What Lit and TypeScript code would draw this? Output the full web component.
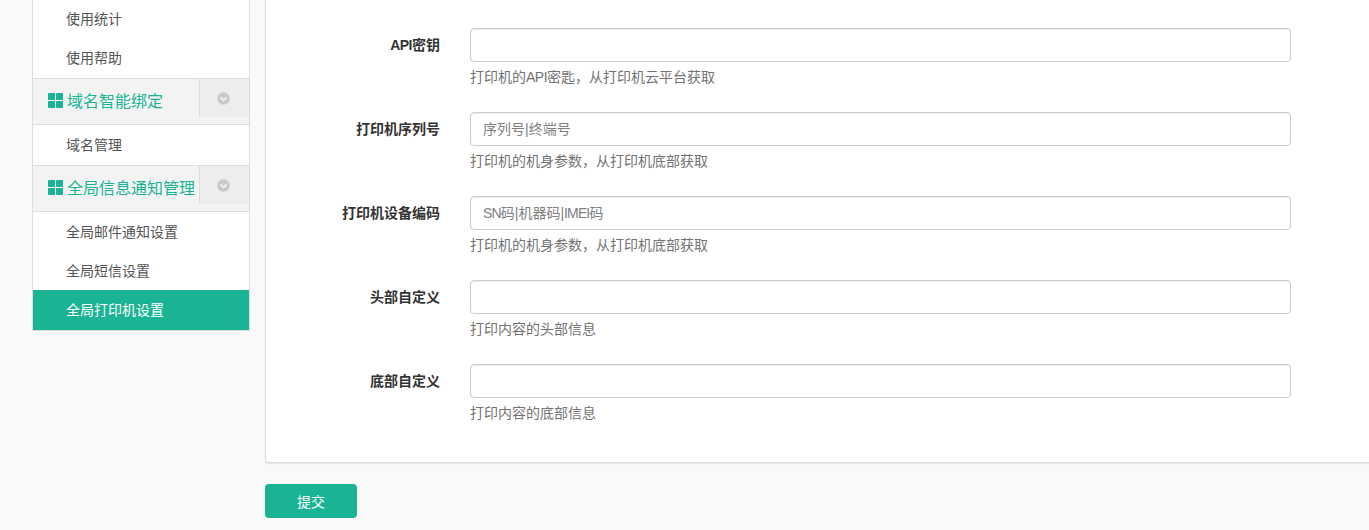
import { LitElement, html, css } from "lit";
import { customElement } from "lit/decorators.js";

const grid = html`<svg class="grid" viewBox="0 0 15 15" width="15" height="15" aria-hidden="true"><rect x="0" y="0" width="7" height="7" rx="1"/><rect x="8" y="0" width="7" height="7" rx="1"/><rect x="0" y="8" width="7" height="7" rx="1"/><rect x="8" y="8" width="7" height="7" rx="1"/></svg>`;
const chev = html`<svg class="chev" viewBox="0 0 13 13" width="13" height="13" aria-hidden="true"><circle cx="6.5" cy="6.5" r="6.2" fill="#c9c9c9"/><path d="M3.4 5.4 6.5 8.4 9.6 5.4" fill="none" stroke="#f0f0f0" stroke-width="2"/></svg>`;
const lat = (s: string) => html`<span class="lat">${s}</span>`;
const latN = (s: string) => html`<span class="lat narrow">${s}</span>`;

const fields = [
  { label: html`${lat("API")}密钥`, ph: "", help: html`打印机的${lat("API")}密匙，从打印机云平台获取` },
  { label: "打印机序列号", ph: "序列号|终端号", help: "打印机的机身参数，从打印机底部获取" },
  { label: "打印机设备编码", ph: html`${latN("SN")}码|机器码|${latN("IMEI")}码`, help: "打印机的机身参数，从打印机底部获取" },
  { label: "头部自定义", ph: "", help: "打印内容的头部信息" },
  { label: "底部自定义", ph: "", help: "打印内容的底部信息" },
];

@customElement("app-root")
export class AppRoot extends LitElement {
  static styles = css`
    :host {
      display: block;
      height: 530px;
      overflow: hidden;
      background: #f9f9f9;
      font-family: "Liberation Sans", "Noto Sans CJK SC", sans-serif;
      font-size: 14px;
      color: #555;
    }
    .lat { letter-spacing: -0.5px; }
    .lat.narrow { letter-spacing: -0.85px; }
    .page { display: flex; align-items: flex-start; padding-left: 32px; gap: 15px; }
    .side {
      width: 216px; flex: none; background: #fff;
      border: 1px solid #ddd; border-top: 0;
    }
    .item { height: 39px; line-height: 39px; padding-left: 33px; color: #555; }
    .item.low { height: 38px; padding-top: 1px; }
    .item.last { height: 40px; line-height: 40px; }
    .item.active { background: #1ab394; color: #fff; }
    .head {
      display: flex; height: 45px; background: #f3f3f3;
      border-top: 1px solid #ddd; border-bottom: 1px solid #ddd;
    }
    .title {
      flex: 1; display: flex; align-items: center; gap: 4px;
      padding: 0 0 4px 15px; font-size: 16px; color: #1ab394; white-space: nowrap;
    }
    .grid { fill: #1ab394; flex: none; margin-top: 1px; }
    .toggle {
      width: 50px; height: 38px; background: #ededed; border-left: 1px solid #ddd;
      display: flex; align-items: center; justify-content: center; padding: 0 2px 0 0; box-sizing: border-box;
    }
    .main { flex: 1; min-width: 0; }
    .panel {
      height: 463px; box-sizing: border-box; background: #fff;
      border: 1px solid #ddd; border-top: 0; border-right: 0;
      box-shadow: 0 1px 1px rgba(0,0,0,.08);
      border-bottom-left-radius: 4px; padding-top: 28px; margin-right: -1px;
    }
    .row { display: flex; height: 84px; }
    .label { width: 174px; flex: none; text-align: right; line-height: 34px; font-weight: 700; color: #333; }
    .col { margin-left: 30px; width: 821px; }
    .input {
      height: 34px; box-sizing: border-box; border: 1px solid #ccc; border-radius: 4px;
      box-shadow: inset 0 1px 1px rgba(0,0,0,.075);
      padding: 0 12px; line-height: 32px; color: #808080; background: #fff;
    }
    .help { margin-top: 5px; line-height: 20px; color: #737373; }
    .submit {
      display: block; margin-top: 21px; width: 92px; height: 34px; border: 0; border-radius: 4px;
      background: #1ab394; color: #fff; font: inherit; padding: 0;
    }
  `;

  render() {
    return html`<div class="page">
      <aside class="side">
        <div class="item">使用统计</div>
        <div class="item">使用帮助</div>
        <div class="head"><div class="title">${grid}域名智能绑定</div><div class="toggle">${chev}</div></div>
        <div class="item last">域名管理</div>
        <div class="head"><div class="title">${grid}全局信息通知管理</div><div class="toggle">${chev}</div></div>
        <div class="item low">全局邮件通知设置</div>
        <div class="item low">全局短信设置</div>
        <div class="item last active">全局打印机设置</div>
      </aside>
      <main class="main">
        <section class="panel">
          ${fields.map(
            (f) => html`<div class="row">
              <div class="label">${f.label}</div>
              <div class="col">
                <div class="input">${f.ph}</div>
                <div class="help">${f.help}</div>
              </div>
            </div>`
          )}
        </section>
        <button class="submit">提交</button>
      </main>
    </div>`;
  }
}
